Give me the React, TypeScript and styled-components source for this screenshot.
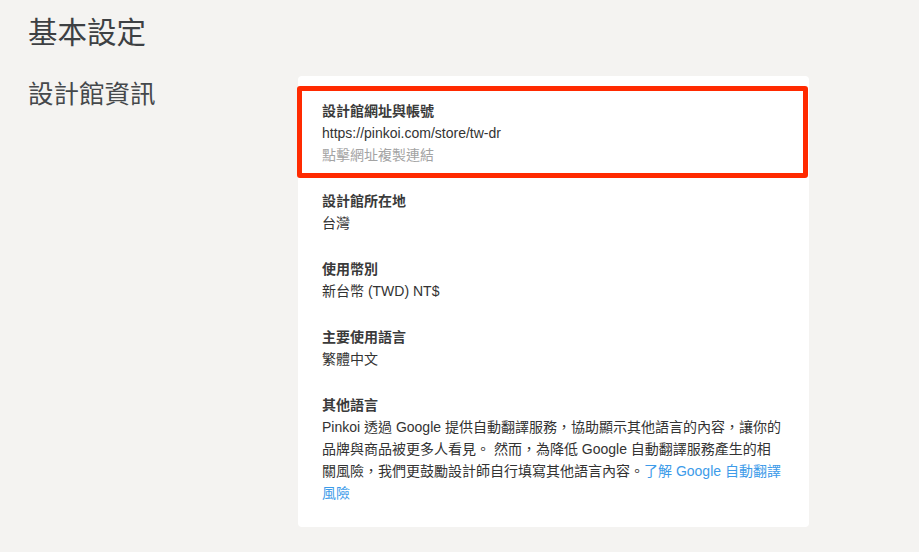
import React from "react";
import styled, { createGlobalStyle } from "styled-components";

const GlobalStyle = createGlobalStyle`
  html, body {
    margin: 0;
    padding: 0;
    background: #f4f3f1;
  }
  body {
    font-family: "Liberation Sans", "Noto Sans CJK TC", sans-serif;
    color: #333;
  }
`;

const Page = styled.div`
  padding: 14px 28px 0;
  min-height: 552px;
  box-sizing: border-box;
`;

const PageTitle = styled.h1`
  margin: 0;
  font-size: 29.5px;
  line-height: 38px;
  font-weight: 400;
  color: #3d4043;
`;

const Row = styled.div`
  display: flex;
  margin-top: 24px;
`;

const SideTitle = styled.h2`
  width: 270px;
  flex: none;
  margin: 0;
  padding-top: 3px;
  font-size: 25.5px;
  line-height: 30px;
  font-weight: 400;
  color: #45484b;
`;

const Card = styled.div`
  width: 511px;
  background: #fff;
  border-radius: 4px;
  padding: 10px 0 23px;
  display: flex;
  flex-direction: column;
  gap: 24px;
`;

const Section = styled.div<{ $highlight?: boolean }>`
  font-size: 14px;
  line-height: 22px;
  padding: 0 27px 0 24px;
  ${(p) =>
    p.$highlight &&
    `
    margin: 0 1px -12px -1px;
    padding: 9px 19px 7px 20px;
    border: 5px solid #ff2a00;
    border-radius: 3px;
  `}
`;

const Label = styled.div`
  font-weight: 700;
  color: #3a3a3a;
`;

const Value = styled.div`
  color: #333;
`;

const Hint = styled.div`
  color: #a3a3a3;
`;

const Link = styled.a`
  color: #3d9be9;
  text-decoration: none;
`;

const App = () => {
  return (
    <>
      <GlobalStyle />
      <Page>
        <PageTitle>基本設定</PageTitle>
        <Row>
          <SideTitle>設計館資訊</SideTitle>
          <Card>
            <Section $highlight>
              <Label>設計館網址與帳號</Label>
              <Value>https://pinkoi.com/store/tw-dr</Value>
              <Hint>點擊網址複製連結</Hint>
            </Section>
            <Section>
              <Label>設計館所在地</Label>
              <Value>台灣</Value>
            </Section>
            <Section>
              <Label>使用幣別</Label>
              <Value>新台幣 (TWD) NT$</Value>
            </Section>
            <Section>
              <Label>主要使用語言</Label>
              <Value>繁體中文</Value>
            </Section>
            <Section>
              <Label>其他語言</Label>
              <Value>
                Pinkoi 透過 Google 提供自動翻譯服務，協助顯示其他語言的內容，讓你的品牌與商品被更多人看見。 然而，為降低 Google 自動翻譯服務產生的相關風險，我們更鼓勵設計師自行填寫其他語言內容。
                <Link href="#">了解 Google 自動翻譯風險</Link>
              </Value>
            </Section>
          </Card>
        </Row>
      </Page>
    </>
  );
};

export default App;
